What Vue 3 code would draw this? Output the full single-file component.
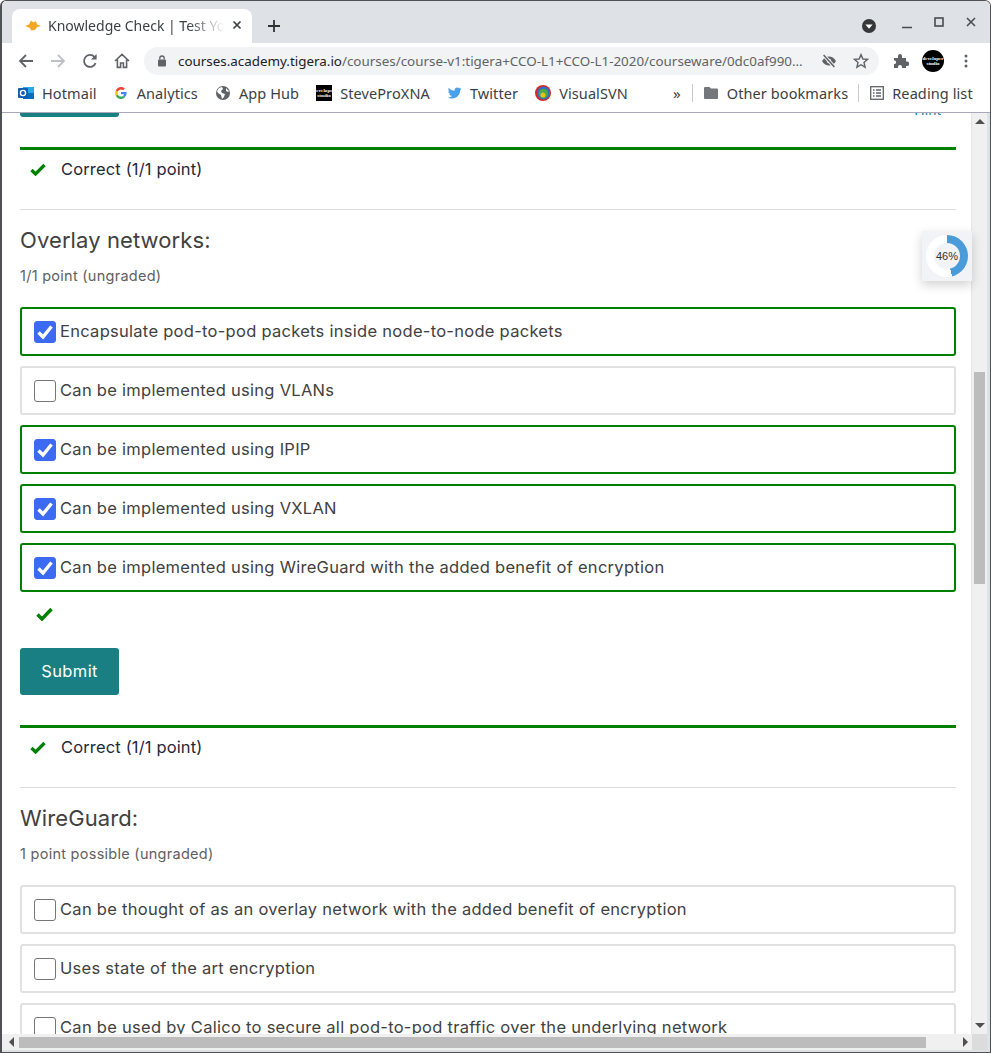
<template>
  <div class="window">
    <header class="tabstrip">
      <div class="tab">
        <svg class="tab-favicon" width="16" height="11" viewBox="0 0 16 11">
          <path d="M0 6 4 4.500 6 .5 8.500 2.500 11 1 12 4.500 16 6 12 7 10 10 6 10.500 5 8Z" fill="#f6a623" />
        </svg>
        <span class="tab-title">Knowledge Check | Test Your Knowledge</span>
        <svg class="tab-close" width="10" height="10" viewBox="0 0 10 10">
          <path d="M1.500 1.500 8.500 8.500M8.500 1.500 1.500 8.500" stroke="#3c4043" stroke-width="1.700" />
        </svg>
      </div>
      <svg class="new-tab" width="14" height="14" viewBox="0 0 14 14">
        <path d="M7 1V13M1 7H13" stroke="#2f3133" stroke-width="1.800" />
      </svg>
      <div class="window-controls">
        <svg width="14" height="14" viewBox="0 0 14 14">
          <circle cx="7" cy="7" r="7" fill="#35373a" />
          <path d="M3.400 5.400H10.600L7 9.800Z" fill="#fff" />
        </svg>
        <svg class="ctl-min" width="10" height="10" viewBox="0 0 10 10">
          <path d="M0 8.500H10" stroke="#4a4c4f" stroke-width="1.600" />
        </svg>
        <svg class="ctl-max" width="10" height="10" viewBox="0 0 10 10">
          <rect x="1" y="1" width="8" height="8" fill="none" stroke="#4a4c4f" stroke-width="1.600" />
        </svg>
        <svg class="ctl-close" width="10" height="10" viewBox="0 0 10 10">
          <path d="M1 1 9 9M9 1 1 9" stroke="#4a4c4f" stroke-width="1.600" />
        </svg>
      </div>
    </header>

    <div class="toolbar">
      <svg width="16" height="16" viewBox="0 0 16 16">
        <path d="M15 8H2M8 2 2 8 8 14" fill="none" stroke="#5f6368" stroke-width="1.800" />
      </svg>
      <svg width="16" height="16" viewBox="0 0 16 16">
        <path d="M1 8H14M8 2 14 8 8 14" fill="none" stroke="#bdc1c6" stroke-width="1.800" />
      </svg>
      <svg width="16" height="16" viewBox="0 0 16 16">
        <path d="M13.600 10.200A6 6 0 1 1 12.400 3.800" fill="none" stroke="#5f6368" stroke-width="1.800" />
        <path d="M14.600 1V6.600H9Z" fill="#5f6368" />
      </svg>
      <svg width="16" height="16" viewBox="0 0 16 16">
        <path d="M1 8 8 1.400 15 8M3.400 6.400V14.400H6.600V10H9.400V14.400H12.600V6.400" fill="none" stroke="#5f6368" stroke-width="1.600" />
      </svg>
      <div class="omnibox">
        <svg class="lock" width="10" height="12" viewBox="0 0 10 12">
          <rect x="1" y="4.400" width="8" height="7" rx="1" fill="#5f6368" />
          <path d="M2.800 4.600V3.200A2.200 2.200 0 0 1 7.200 3.200V4.600" fill="none" stroke="#5f6368" stroke-width="1.300" />
        </svg>
        <span class="url"><b>courses.academy.tigera.io</b>/courses/course-v1:tigera+CCO-L1+CCO-L1-2020/courseware/0dc0af990…</span>
        <svg class="eye" width="16" height="14" viewBox="0 0 16 14">
          <path d="M1 7C3 3.600 5.400 2.400 8 2.400S13 3.600 15 7C13 10.400 10.600 11.600 8 11.600S3 10.400 1 7Z" fill="#5f6368" />
          <circle cx="8" cy="7" r="2.200" fill="#f1f3f4" />
          <path d="M2.600 1 13.400 13" stroke="#f1f3f4" stroke-width="3.400" />
          <path d="M2.600 1 13.400 13" stroke="#5f6368" stroke-width="1.500" />
        </svg>
        <svg class="star" width="16" height="16" viewBox="0 0 16 16">
          <path d="M8 1.600 9.900 6 14.600 6.400 11 9.500 12.100 14.200 8 11.700 3.900 14.200 5 9.500 1.400 6.400 6.100 6Z" fill="none" stroke="#5f6368" stroke-width="1.400" />
        </svg>
      </div>
      <svg class="puzzle" width="16" height="16" viewBox="0 0 16 16">
        <path d="M1 5H5V3A2 2 0 0 1 9 3V5H13V8.600H14A2.200 2.200 0 0 1 14 13H13V15H9V14A2 2 0 0 0 5 14V15H1V11H2A2 2 0 0 0 2 7.400H1Z" fill="#5f6368" />
      </svg>
      <div class="avatar"><span>developer</span><span>studio</span></div>
      <svg class="menu-dots" width="4" height="14" viewBox="0 0 4 14">
        <circle cx="2" cy="2" r="1.500" fill="#5f6368" />
        <circle cx="2" cy="7" r="1.500" fill="#5f6368" />
        <circle cx="2" cy="12" r="1.500" fill="#5f6368" />
      </svg>
    </div>

    <nav class="bookmarks">
      <div class="bookmark">
        <svg width="16" height="16" viewBox="0 0 16 16">
          <rect x="5" y="2" width="11" height="12" fill="#28a8ea" />
          <path d="M5 8H16V14H5Z" fill="#0a6cbd" />
          <rect y="3" width="10" height="10" rx="1" fill="#0f5db0" />
          <circle cx="5" cy="8" r="2.600" fill="none" stroke="#fff" stroke-width="1.400" />
        </svg>
        <span>Hotmail</span>
      </div>
      <div class="bookmark bookmark--analytics">
        <svg class="g-icon" width="12" height="12" viewBox="0 0 12 12">
          <path d="M11.600 6.100C11.600 5.700 11.600 5.300 11.500 5H6V7.200H9.200C9 7.900 8.600 8.500 8 8.900L9.800 10.300C10.900 9.300 11.600 7.900 11.600 6.100Z" fill="#4285f4" />
          <path d="M6 12C7.600 12 9 11.500 9.800 10.300L8 8.900C7.500 9.300 6.800 9.600 6 9.600 4.500 9.600 3.200 8.600 2.700 7.200L.8 8.700C1.800 10.700 3.800 12 6 12Z" fill="#34a853" />
          <path d="M2.700 7.200C2.500 6.500 2.500 5.500 2.700 4.800L.8 3.300C0 4.900 0 7.100.8 8.700Z" fill="#fbbc05" />
          <path d="M6 2.400C6.900 2.400 7.600 2.700 8.200 3.300L9.900 1.600C8.900.6 7.600 0 6 0 3.800 0 1.800 1.300.8 3.300L2.700 4.800C3.200 3.400 4.500 2.400 6 2.400Z" fill="#ea4335" />
        </svg>
        <span>Analytics</span>
      </div>
      <div class="bookmark">
        <svg width="16" height="16" viewBox="0 0 16 16">
          <circle cx="8" cy="8" r="7" fill="#5f6368" />
          <path d="M4 3 7 2 8 4 6 6 7 8 10 9 9 12 7 14 6 10 3 8 2 6ZM11 3 14 6 13 7 11 6Z" fill="#fff" />
        </svg>
        <span>App Hub</span>
      </div>
      <div class="bookmark">
        <div class="steve-icon"><span>developer</span><span>studio</span></div>
        <span>SteveProXNA</span>
      </div>
      <div class="bookmark">
        <svg width="15" height="16" viewBox="0 0 16 16">
          <path d="M15.500 3.400C15 3.600 14.400 3.800 13.800 3.900 14.400 3.500 14.900 2.900 15.100 2.200 14.500 2.600 13.900 2.800 13.200 3 12.600 2.300 11.800 2 11 2 9.300 2 8 3.300 8 5 8 5.200 8 5.500 8.100 5.700 5.600 5.600 3.400 4.400 1.900 2.500 1.600 3 1.500 3.500 1.500 4 1.500 5.100 2 6 2.800 6.500 2.300 6.500 1.900 6.300 1.400 6.100 1.400 7.600 2.500 8.800 3.800 9.100 3.400 9.200 3 9.200 2.500 9.100 2.900 10.300 4 11.200 5.300 11.200 4.300 12 3 12.500 1.600 12.500 1.300 12.500 1.100 12.500.900 12.500 2.200 13.300 3.800 13.800 5.500 13.800 11 13.800 14 9.200 14 5.300V4.900C14.600 4.500 15.100 4 15.500 3.400Z" fill="#4aa1eb" />
        </svg>
        <span>Twitter</span>
      </div>
      <div class="bookmark">
        <svg width="16" height="16" viewBox="0 0 16 16">
          <circle cx="8" cy="8" r="8" fill="#d8262c" />
          <circle cx="8.500" cy="8" r="6.500" fill="#2f6fc0" />
          <circle cx="8.500" cy="8.500" r="4.800" fill="#4aa84a" />
          <circle cx="8" cy="10" r="2.500" fill="#e6c21e" />
        </svg>
        <span>VisualSVN</span>
      </div>
      <span class="chevrons">»</span>
      <i class="bm-sep"></i>
      <div class="bookmark bookmark--folder">
        <svg width="14" height="12" viewBox="0 0 14 12">
          <path d="M1 0H5.500L7 1.600H13A1 1 0 0 1 14 2.600V11A1 1 0 0 1 13 12H1A1 1 0 0 1 0 11V1A1 1 0 0 1 1 0Z" fill="#74787c" />
        </svg>
        <span>Other bookmarks</span>
      </div>
      <i class="bm-sep bm-sep--tight"></i>
      <div class="bookmark">
        <svg width="14" height="14" viewBox="0 0 14 14">
          <rect x=".7" y=".7" width="12.600" height="12.600" fill="none" stroke="#5f6368" stroke-width="1.300" />
          <path d="M3 4H4.500M6 4H11M3 7H4.500M6 7H11M3 10H4.500M6 10H11" stroke="#5f6368" stroke-width="1.300" />
        </svg>
        <span>Reading list</span>
      </div>
    </nav>

    <div class="viewport">
      <div class="page-row">
        <main class="page">
          <div class="prev-actions">
            <div class="prev-submit"></div>
            <a class="hint">Hint</a>
          </div>

          <div class="feedback feedback--first">
            <svg class="check-small" width="16" height="13" viewBox="0 0 16 13">
              <path d="M1.500 7 5.600 11 14.500 2" fill="none" stroke="#008000" stroke-width="3.200" />
            </svg>
            <span>Correct (1/1 point)</span>
          </div>

          <section v-for="problem in problems" :key="problem.title" class="problem">
            <h2>{{ problem.title }}</h2>
            <p class="points">{{ problem.points }}</p>
            <ul class="choices">
              <li
                v-for="choice in problem.choices"
                :key="choice.text"
                class="choice"
                :class="{ 'choice--on': choice.checked }"
              >
                <span class="box" :class="{ 'box--on': choice.checked }">
                  <svg v-if="choice.checked" width="18" height="16" viewBox="0 0 18 16">
                    <path d="M2.500 8.500 7 13 15.500 2.500" fill="none" stroke="#fff" stroke-width="3.400" />
                  </svg>
                </span>
                <span class="choice-text">{{ choice.text }}</span>
              </li>
            </ul>
            <template v-if="problem.answered">
              <svg class="check-big" width="17" height="14" viewBox="0 0 17 14">
                <path d="M1.500 7.500 6 12 15.500 2" fill="none" stroke="#008000" stroke-width="3.400" />
              </svg>
              <button class="submit">Submit</button>
              <div class="feedback">
                <svg class="check-small" width="16" height="13" viewBox="0 0 16 13">
                  <path d="M1.500 7 5.600 11 14.500 2" fill="none" stroke="#008000" stroke-width="3.200" />
                </svg>
                <span>Correct (1/1 point)</span>
              </div>
            </template>
          </section>
        </main>

        <div class="vscroll">
          <span class="arrow arrow--up"></span>
          <div class="vtrack"><div class="vthumb"></div></div>
          <span class="arrow arrow--down"></span>
        </div>

        <div class="progress-widget">
          <div class="ring">
            <div class="ring-hole">46%</div>
          </div>
        </div>
      </div>

      <div class="hscroll">
        <span class="arrow arrow--left"></span>
        <div class="htrack"><div class="hthumb"></div></div>
        <span class="arrow arrow--right"></span>
        <div class="corner"></div>
      </div>
    </div>
  </div>
</template>

<script setup>
const problems = [
  {
    title: 'Overlay networks:',
    points: '1/1 point (ungraded)',
    answered: true,
    choices: [
      { text: 'Encapsulate pod-to-pod packets inside node-to-node packets', checked: true },
      { text: 'Can be implemented using VLANs', checked: false },
      { text: 'Can be implemented using IPIP', checked: true },
      { text: 'Can be implemented using VXLAN', checked: true },
      { text: 'Can be implemented using WireGuard with the added benefit of encryption', checked: true }
    ]
  },
  {
    title: 'WireGuard:',
    points: '1 point possible (ungraded)',
    answered: false,
    choices: [
      { text: 'Can be thought of as an overlay network with the added benefit of encryption', checked: false },
      { text: 'Uses state of the art encryption', checked: false },
      { text: 'Can be used by Calico to secure all pod-to-pod traffic over the underlying network', checked: false }
    ]
  }
];
</script>

<style>
html,
body {
  margin: 0;
  overflow: hidden;
}
</style>

<style scoped>
.window {
  box-sizing: border-box;
  width: 991px;
  height: 1053px;
  display: flex;
  flex-direction: column;
  overflow: hidden;
  background: #fff;
  border: 1px solid #4f5154;
  border-left-width: 2px;
  border-radius: 6px 6px 0 0;
  font-family: "Noto Sans", "Open Sans", sans-serif;
}

.tabstrip {
  flex: none;
  height: 42px;
  display: flex;
  align-items: flex-end;
  padding-left: 10px;
  background: #dee1e6;
}

.tab {
  width: 240px;
  height: 34px;
  box-sizing: border-box;
  display: flex;
  align-items: center;
  padding: 0 10px 2px 13px;
  background: #fff;
  border-radius: 8px 8px 0 0;
}

.tab-favicon {
  flex: none;
}

.tab-title {
  flex: 1;
  margin-left: 7px;
  overflow: hidden;
  white-space: nowrap;
  font-size: 14px;
  color: #3c4043;
  -webkit-mask-image: linear-gradient(to right, #000 78%, transparent 98%);
  mask-image: linear-gradient(to right, #000 78%, transparent 98%);
}

.tab-close {
  flex: none;
  margin-left: 4px;
}

.new-tab {
  margin: 0 0 10px 15px;
}

.window-controls {
  margin-left: auto;
  align-self: stretch;
  width: 130px;
  display: flex;
  align-items: flex-start;
  padding-top: 18px;
  box-sizing: border-box;
  padding-left: 2px;
}

.ctl-min {
  margin: 0 0 0 26px;
}

.ctl-max {
  margin: -2px 0 0 22px;
}

.ctl-close {
  margin: -2px 0 0 22px;
}

.toolbar {
  flex: none;
  height: 34px;
  box-sizing: border-box;
  display: flex;
  align-items: center;
  padding: 2px 0 0 16px;
  gap: 16px;
}

.omnibox {
  width: 735px;
  height: 28px;
  flex: none;
  display: flex;
  align-items: center;
  margin-left: -2px;
  padding-left: 13px;
  box-sizing: border-box;
  background: #f1f3f4;
  border-radius: 14px;
  font-size: 13.4px;
  color: #5f6368;
}

.url {
  margin-left: 11px;
  width: 627px;
  white-space: nowrap;
  overflow: hidden;
}

.url b {
  font-weight: 400;
  color: #202124;
}

.eye {
  margin-left: 16px;
}

.star {
  margin-left: 16px;
}

.puzzle {
  margin-left: -2px;
}

.avatar {
  width: 22px;
  height: 22px;
  margin-left: -3px;
  border-radius: 50%;
  background: #000;
  color: #fff;
  font-size: 5px;
  font-weight: 700;
  line-height: 5px;
  display: flex;
  flex-direction: column;
  align-items: center;
  justify-content: center;
  font-family: "Liberation Serif", serif;
  flex: none;
}

.menu-dots {
  margin-left: 4px;
}

.bookmarks {
  flex: none;
  height: 36px;
  box-sizing: border-box;
  display: flex;
  align-items: center;
  padding: 0 0 4px 16px;
  gap: 17px;
  border-bottom: 1px solid #a8a8b8;
  font-size: 14.5px;
  letter-spacing: .1px;
  color: #3c4043;
  white-space: nowrap;
}

.bookmark {
  display: flex;
  align-items: center;
  gap: 8px;
}

.bookmark--analytics {
  margin-left: 1px;
}

.bookmark--folder {
  gap: 9px;
}

.g-icon {
  margin-right: 2px;
}

.steve-icon {
  width: 16px;
  height: 16px;
  background: #000;
  color: #fff;
  font-size: 5px;
  font-weight: 700;
  line-height: 5px;
  display: flex;
  flex-direction: column;
  align-items: center;
  justify-content: center;
  font-family: "Liberation Serif", serif;
}

.chevrons {
  margin-left: 28px;
  font-size: 15px;
  margin-right: -6px;
}

.bm-sep {
  width: 1px;
  height: 18px;
  background: #c8cacc;
  margin-right: -6px;
}

.bm-sep--tight {
  margin-left: -7px;
}

.viewport {
  flex: 1;
  min-height: 0;
  display: flex;
  flex-direction: column;
  padding: 0 3px 2px 0;
  background: #dee1e6;
  font-family: Inter, "Open Sans", sans-serif;
  color: #414141;
}

.page-row {
  flex: 1;
  min-height: 0;
  display: flex;
  position: relative;
  background: #fff;
}

.page {
  flex: 1;
  min-width: 0;
  overflow: hidden;
  padding: 0 15px 0 18px;
}

.prev-actions {
  height: 5px;
  display: flex;
  justify-content: space-between;
  overflow: hidden;
}

.prev-submit {
  width: 99px;
  height: 4px;
  background: #1a7f83;
  border-radius: 0 0 3px 3px;
}

.hint {
  margin: -12px 15px 0 0;
  font-size: 14px;
  color: #1a7f9a;
}

.feedback {
  height: 63px;
  box-sizing: border-box;
  margin-top: 30px;
  display: flex;
  align-items: flex-start;
  padding: 9px 0 0 10px;
  border-top: 3px solid #008000;
  border-bottom: 1px solid #ddd;
  font-size: 16.5px;
  letter-spacing: .15px;
  color: #1f2937;
}

.feedback--first {
  margin-top: 29px;
}

.check-small {
  margin: 4px 15px 0 0;
}

.problem h2 {
  margin: 0;
  padding-top: 15px;
  font-size: 22px;
  font-weight: 400;
  letter-spacing: .1px;
  line-height: 30px;
  color: #414141;
}

.points {
  margin: 11px 0 0;
  font-size: 14.5px;
  letter-spacing: .27px;
  line-height: 20px;
  color: #5f5f5f;
}

.choices {
  list-style: none;
  margin: 21px 0 0;
  padding: 0;
  display: flex;
  flex-direction: column;
  gap: 10px;
}

.choice {
  height: 49px;
  box-sizing: border-box;
  display: flex;
  align-items: center;
  gap: 4px;
  padding-left: 12px;
  border: 2px solid #e1e1e1;
  border-radius: 3px;
  font-size: 16.5px;
  letter-spacing: .28px;
}

.choice--on {
  border-color: #008000;
}

.choice-text {
  margin-top: -2px;
}

.box {
  width: 22px;
  height: 22px;
  box-sizing: border-box;
  flex: none;
  display: flex;
  align-items: center;
  justify-content: center;
  background: #fff;
  border: 1px solid #767676;
  border-radius: 3px;
}

.box--on {
  background: #3d6af2;
  border-color: #3d6af2;
}

.check-big {
  display: block;
  margin: 15px 0 0 16px;
}

.submit {
  display: block;
  width: 99px;
  height: 47px;
  margin-top: 27px;
  padding: 0 0 2px;
  border: 0;
  border-radius: 3px;
  background: #1a7f83;
  color: #fff;
  font-family: inherit;
  font-size: 16.5px;
  letter-spacing: .4px;
}

.vscroll {
  flex: none;
  width: 16px;
  display: flex;
  flex-direction: column;
  align-items: center;
  background: #f0f0f0;
  border-left: 1px solid #e4e4e4;
  box-sizing: border-box;
  padding: 6px 0;
}

.vtrack {
  flex: 1;
  width: 100%;
  padding-top: 248px;
  box-sizing: border-box;
}

.vthumb {
  width: 11px;
  height: 212px;
  margin: 0 auto;
  background: #bcbcbc;
}

.arrow {
  flex: none;
  width: 0;
  height: 0;
  border: 5px solid transparent;
}

.arrow--up {
  border-top: 0;
  border-bottom: 5px solid #505050;
}

.arrow--down {
  border-bottom: 0;
  border-top: 5px solid #505050;
}

.arrow--left {
  border-left: 0;
  border-right: 5px solid #505050;
}

.arrow--right {
  border-right: 0;
  border-left: 5px solid #505050;
}

.progress-widget {
  position: absolute;
  top: 118px;
  right: 15px;
  width: 50px;
  height: 50px;
  display: flex;
  align-items: center;
  justify-content: center;
  background: #f1f3f6;
  box-shadow: 0 4px 10px rgba(0, 0, 0, .18);
}

.ring {
  width: 42px;
  height: 42px;
  border-radius: 50%;
  display: flex;
  align-items: center;
  justify-content: center;
  background: conic-gradient(#4a9bd9 0 46%, #fff 46% 100%);
}

.ring-hole {
  width: 26px;
  height: 26px;
  border-radius: 50%;
  background: #f1f3f6;
  display: flex;
  align-items: center;
  justify-content: center;
  font-size: 11px;
  color: #333;
  font-family: "Liberation Sans", sans-serif;
}

.hscroll {
  flex: none;
  height: 16px;
  display: flex;
  align-items: center;
  background: #f0f0f0;
  padding-left: 7px;
}

.htrack {
  flex: 1;
  height: 11px;
  margin-left: 5px;
}

.hthumb {
  width: 907px;
  height: 100%;
  background: #bcbcbc;
}

.corner {
  width: 15px;
  height: 16px;
  margin-left: 4px;
  background: #dcdcdc;
}
</style>
